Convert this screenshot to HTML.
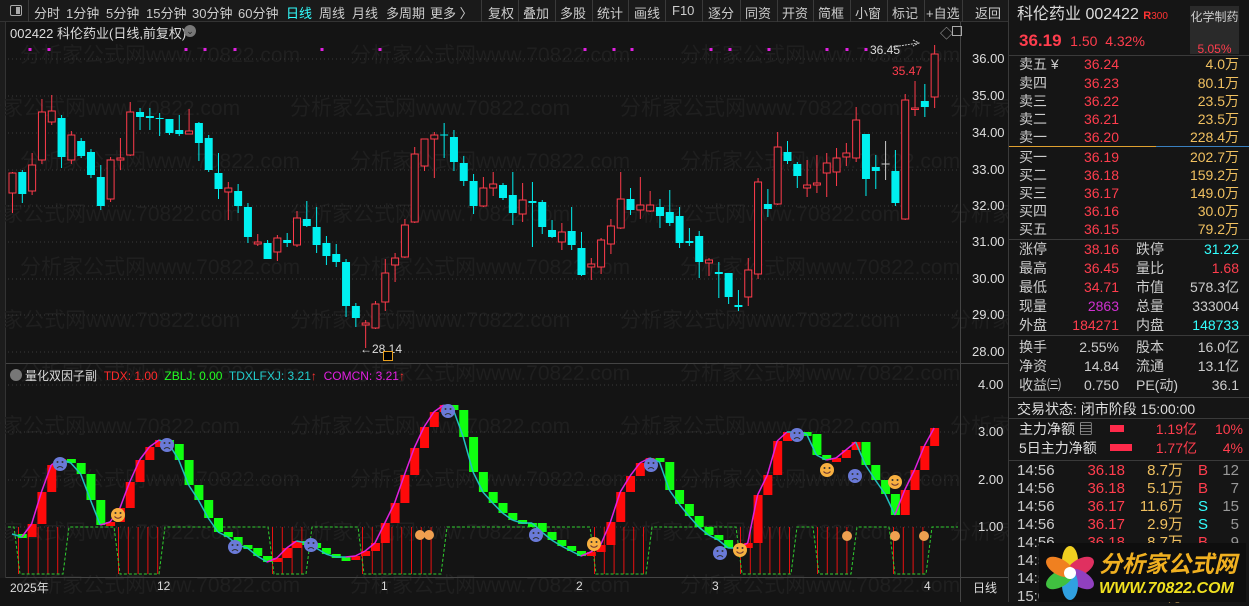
<!DOCTYPE html>
<html><head><meta charset="utf-8"><style>
*{margin:0;padding:0;box-sizing:border-box}
body{width:1249px;height:602px;background:#141414;overflow:hidden;position:relative;font-family:"Liberation Sans","Noto Sans CJK SC",sans-serif;color:#ccc}
.a{position:absolute;white-space:nowrap}
#tb{position:absolute;left:0;top:0;width:1008px;height:22px;background:#1a1a1a;border-bottom:1px solid #333;font-size:13px;color:#ccc}
#tb span{position:absolute;top:3px}
.sep{position:absolute;top:0;width:1px;height:22px;background:#3a3a3a}
#rp{position:absolute;left:1008px;top:0;width:241px;height:602px;background:#151515;border-left:1px solid #3a3a3a;font-size:14px}
#rp .a{line-height:18px}
.r{color:#ff3d4d}.y{color:#f0c060}.c{color:#3ff}.w{color:#ccc}.m{color:#d030d0}
.hl{position:absolute;left:0;width:241px;height:1px;background:#3a3a3a}
</style></head><body>
<div id="tb">
<div style="position:absolute;left:10px;top:5px;width:12px;height:11px;border:1px solid #aaa;border-radius:2px"><div style="position:absolute;right:1px;top:1px;width:4px;height:7px;background:#aaa"></div></div>
<div class="sep" style="left:28px"></div>
<span style="left:34px">分时</span><span style="left:66px">1分钟</span><span style="left:106px">5分钟</span><span style="left:146px">15分钟</span><span style="left:192px">30分钟</span><span style="left:238px">60分钟</span><span style="left:286px;color:#3ff">日线</span><span style="left:319px">周线</span><span style="left:352px">月线</span><span style="left:386px">多周期</span><span style="left:430px">更多 〉</span>
<div class="sep" style="left:481px"></div><span style="left:488px">复权</span>
<div class="sep" style="left:518px"></div><span style="left:523px">叠加</span>
<div class="sep" style="left:555px"></div><span style="left:560px">多股</span>
<div class="sep" style="left:592px"></div><span style="left:597px">统计</span>
<div class="sep" style="left:628px"></div><span style="left:634px">画线</span>
<div class="sep" style="left:665px"></div><span style="left:672px">F10</span>
<div class="sep" style="left:702px"></div><span style="left:708px">逐分</span>
<div class="sep" style="left:740px"></div><span style="left:745px">同资</span>
<div class="sep" style="left:777px"></div><span style="left:782px">开资</span>
<div class="sep" style="left:813px"></div><span style="left:818px">简框</span>
<div class="sep" style="left:850px"></div><span style="left:855px">小窗</span>
<div class="sep" style="left:887px"></div><span style="left:892px">标记</span>
<div class="sep" style="left:924px"></div><span style="left:926px">+自选</span>
<div class="sep" style="left:962px"></div><span style="left:975px">返回</span>
</div>
<div style="position:absolute;left:0;top:22px;width:6px;height:556px;background:#1c1c1c;border-right:1px solid #333"></div>
<svg id="ch" width="1008" height="602" style="position:absolute;left:0;top:0"></svg>
<div class="a" style="left:10px;top:23px;font-size:13px;color:#ddd">002422 科伦药业(日线,前复权)</div>
<div class="a" style="left:184px;top:25px;width:12px;height:12px;border-radius:6px;background:#777;color:#222;font-size:9px;text-align:center;line-height:12px">⌄</div>
<div class="a" style="left:940px;top:23px;font-size:13px;color:#aaa">◇</div>
<div class="a" style="left:952px;top:26px;width:10px;height:10px;border:1px solid #aaa"></div>
<div class="a" style="left:870px;top:43px;font-size:12px;color:#ddd">36.45</div>
<div class="a" style="left:892px;top:64px;font-size:12px;color:#ff3d4d">35.47</div>
<div class="a" style="left:360px;top:342px;font-size:12px;color:#ddd">←28.14</div>
<div class="a" style="left:383px;top:351px;width:10px;height:10px;border:1px solid #e8a020;background:#000"></div>
<div class="a" style="left:10px;top:369px;width:12px;height:12px;border-radius:6px;background:#777"></div>
<div class="a" style="left:25px;top:367px;font-size:12px"><span style="color:#ddd">量化双因子副</span>&nbsp; <span style="color:#ff2a2a">TDX: 1.00</span>&nbsp; <span style="color:#2f2">ZBLJ: 0.00</span>&nbsp; <span style="color:#2cc">TDXLFXJ: 3.21</span><span style="color:#f33">↑</span>&nbsp; <span style="color:#e020e0">COMCN: 3.21</span><span style="color:#f33">↑</span></div>
<div class="a" style="left:10px;top:579px;font-size:12px;color:#ddd">2025年</div>
<div class="a" style="left:157px;top:579px;font-size:12px;color:#ddd">12</div>
<div class="a" style="left:381px;top:579px;font-size:12px;color:#ddd">1</div>
<div class="a" style="left:576px;top:579px;font-size:12px;color:#ddd">2</div>
<div class="a" style="left:712px;top:579px;font-size:12px;color:#ddd">3</div>
<div class="a" style="left:924px;top:579px;font-size:12px;color:#ddd">4</div>
<div class="a" style="left:973px;top:579px;font-size:12px;color:#ddd">日线</div>
<div id="ax"></div>

<div id="rp">
<div class="a" style="left:8px;top:4px;font-size:16px;color:#ddd;line-height:22px">科伦药业 002422 <span style="color:#f33;font-size:11px;font-weight:bold">R</span><span style="color:#f33;font-size:10px">300</span></div>
<div class="a" style="left:10px;top:30px;font-size:17px;line-height:22px"><b class="r">36.19</b> <span class="r" style="font-size:14px">&nbsp;1.50&nbsp; 4.32%</span></div>
<div class="a" style="left:181px;top:6px;width:49px;height:48px;background:#2a2a2a;font-size:12px;text-align:center;color:#ccc;line-height:16px;padding-top:3px">化学制药<br><br><span class="r">5.05%</span></div>
<div class="hl" style="top:55px"></div>
<div id="q"></div>
<div class="a" style="left:0;top:146px;width:147px;height:1px;background:#e0a030"></div>
<div class="a" style="left:147px;top:146px;width:94px;height:1px;background:#3a80c0"></div>
<div class="hl" style="top:239px"></div><div class="hl" style="top:335px"></div><div class="hl" style="top:397px"></div><div class="hl" style="top:418px"></div><div class="hl" style="top:460px"></div>
<div class="a" style="left:8px;top:400px;color:#ddd">交易状态: 闭市阶段 15:00:00</div>
<div class="a" style="left:10px;top:420px;color:#ddd">主力净额 ▤</div>
<div class="a" style="left:10px;top:439px;color:#ddd">5日主力净额</div>
<div class="a" style="left:101px;top:425px;width:14px;height:7px;background:#ff2a4a"></div>
<div class="a" style="left:101px;top:444px;width:22px;height:7px;background:#ff2a4a"></div>
<div class="a r" style="right:52px;top:420px">1.19亿</div><div class="a r" style="right:6px;top:420px">10%</div>
<div class="a r" style="right:52px;top:439px">1.77亿</div><div class="a r" style="right:6px;top:439px">4%</div>
<div class="a" style="left:30px;top:543px;width:207px;height:59px;background:#0e0e0e"></div>
<svg class="a" style="left:32px;top:545px" width="58" height="55" viewBox="0 0 58 55">
<g transform="translate(29,28)"><ellipse rx="8" ry="15" cy="-12" fill="#f0d020"/><ellipse rx="8" ry="15" cy="-12" fill="#e03060" transform="rotate(60)"/><ellipse rx="8" ry="15" cy="-12" fill="#9040c0" transform="rotate(120)"/><ellipse rx="8" ry="15" cy="-12" fill="#30a0e0" transform="rotate(180)"/><ellipse rx="8" ry="15" cy="-12" fill="#40c040" transform="rotate(240)"/><ellipse rx="8" ry="15" cy="-12" fill="#f08020" transform="rotate(300)"/><circle r="6" fill="#fff"/></g></svg>
<div class="a" style="left:90px;top:551px;font-size:23px;font-weight:bold;color:#f0b020;font-style:italic;line-height:26px">分析家公式网</div>
<div class="a" style="left:90px;top:579px;font-size:16px;font-weight:bold;color:#f0e020;font-style:italic;line-height:20px">WWW.70822.COM</div>
</div>
<script>
var s=document.getElementById('ch'),h='';
function X(i){return 12+i*9.81}
for(var ry=0;ry<11;ry++){var yy=62+ry*53;for(var k=-1;k<4;k++){h+='<text x="'+(k*330+(ry%2?-60:0)+20)+'" y="'+yy+'" font-size="21" fill="#1f1f1f" font-family="Liberation Sans,Noto Sans CJK SC,sans-serif">分析家公式网www.70822.com</text>'}}
[59,96,133,170,206,242,279,315,352].forEach(function(y){h+='<line x1="8" x2="960" y1="'+y+'" y2="'+y+'" stroke="#3a3a3a" stroke-dasharray="1,3"/>'});
[385,432,480,527].forEach(function(y){h+='<line x1="8" x2="960" y1="'+y+'" y2="'+y+'" stroke="#3a3a3a" stroke-dasharray="1,3"/>'});
h+='<line x1="960.5" x2="960.5" y1="22" y2="602" stroke="#444"/><line x1="6" x2="1008" y1="363.5" y2="363.5" stroke="#444"/><line x1="6" x2="1008" y1="577.5" y2="577.5" stroke="#444"/>';
[30,49,186,205,235,322,380,585,614,632,711,730,769,827,847,866].forEach(function(x){h+='<rect x="'+(x-1.5)+'" y="48" width="3" height="3" fill="#e020e0"/>'});
var C=[['r',173,193,172,213],['c',172,194,170,203],['r',165,191,153,195],['r',112,160,99,164],['r',111,122,95,125],['c',118,157,115,168],['r',135,160,131,164],['c',141,156,138,158],['c',152,175,149,178],['c',177,206,165,210],['r',160,199,157,202],['r',158,160,138,170],['r',112,155,102,156],['c',112,117,108,130],['c',116,118,108,130],['c',118,119,113,136],['c',119,133,119,135],['c',130,134,115,136],['r',131,134,109,134],['c',123,143,122,161],['c',138,170,135,172],['c',173,189,153,199],['r',188,192,182,220],['c',191,206,184,213],['c',207,237,203,243],['r',242,244,234,246],['c',243,259,240,259],['r',238,252,235,261],['c',240,243,233,247],['r',218,245,211,247],['c',219,226,201,227],['c',227,245,207,253],['c',243,256,236,265],['c',254,262,244,267],['c',262,306,259,317],['c',306,318,303,327],['r',323,325,320,348],['r',304,328,301,329],['r',273,302,259,311],['r',258,265,253,282],['r',225,257,219,258],['r',154,222,147,223],['r',139,166,139,171],['r',135,139,132,178],['c',134.5,135.5,123,158],['c',137,162,130,171],['c',163,181,156,186],['c',181,206,174,214],['r',188,206,177,207],['r',184,188,172,196],['c',185,198,183,200],['c',195,213,172,225],['r',200,214,183,222],['c',201,203,182,247],['c',202,227,200,234],['c',230,237,220,238],['r',232,242,223,250],['c',231,245,207,250],['c',248,275,232,276],['r',264,267,258,280],['r',240,267,238,274],['r',226,244,219,254],['r',199,228,172,229],['c',199,210,188,215],['r',205,210,177,219],['r',205,211,191,212],['c',207,216,199,228],['c',212,223,190,226],['c',216,243,207,248],['c',241,243,228,246],['c',236,262,231,278],['r',260,263,258,276],['c',272,274,262,298],['c',273,297,273,304],['c',305,307,290,311],['r',270,297,258,306],['r',182,274,178,279],['c',204,209,189,217],['r',147,204,132,205],['c',152,161,141,164],['c',164,176,162,188],['r',185,188,160,197],['r',183,185,155,193],['r',163,173,153,197],['r',158,172,148,186],['r',153,157,143,166],['r',120,158,107,162],['c',134,179,134,196],['c',167,171,155,189],['w',163.5,164.5,141,180],['c',171,203,150,206],['r',100,219,94,220],['r',108,109.5,81,116],['c',101,107,84,117],['r',54,97,45,108]];
C.forEach(function(d,i){var x=X(i),col=d[0]=='r'?'#ff3b4b':d[0]=='c'?'#00f0f0':'#ccc';
h+='<line x1="'+(x+.5)+'" x2="'+(x+.5)+'" y1="'+d[3]+'" y2="'+d[4]+'" stroke="'+col+'"/>';
var bh=Math.max(1,d[2]-d[1]);
if(d[0]=='r')h+='<rect x="'+(x-3)+'" y="'+d[1]+'" width="7" height="'+bh+'" fill="#141414" stroke="'+col+'" stroke-width="1"/>';
else h+='<rect x="'+(x-3.5)+'" y="'+d[1]+'" width="8" height="'+bh+'" fill="'+col+'"/>';});
h+='<path d="M893 47 L918 43 M913 40 L919 43 L913 46" stroke="#ccc" fill="none" stroke-dasharray="2,1"/>';
var reg=[[18,62],[118,158],[272,305],[362,440],[594,645],[740,790],[817,850],[893,925]];
var pts='M8 527';
reg.forEach(function(r){pts+=' L'+(r[0]-4)+' 527 L'+(r[0]+2)+' 574 L'+(r[1]+1)+' 574 L'+(r[1]+7)+' 527';for(var x=r[0];x<=r[1];x+=9.8)h+='<line x1="'+(x+.5)+'" x2="'+(x+.5)+'" y1="527" y2="574" stroke="#e81010"/>';});
pts+=' L958 527';
h+='<path d="'+pts+'" stroke="#30d030" fill="none" stroke-dasharray="3,2"/>';
var V=[534,537,524,492,465,459,463,474,500,525,522,508,482,460,447,440,444,460,485,500,518,532,537,545,548,556,562,558,548,541,543,548,554,557,557,556,551,543,523,503,475,448,427,412,405,410,437,472,492,503,513,520,523,523,532,540,546,551,556,552,545,522,492,476,463,458,462,490,504,516,527,535,540,548,548,543,495,475,441,432,432,434,455,460,458,450,442,465,480,494,515,490,470,446,428];
V.forEach(function(v,i){if(i==0)return;var p=V[i-1],x=X(i),t=Math.min(p,v),b=Math.max(p,v),hh=Math.max(4,b-t);
h+='<rect x="'+(x-4)+'" y="'+t+'" width="9" height="'+hh+'" fill="'+(v<p?'#ff0a0a':'#10ff10')+'"/>';});
V.forEach(function(v,i){if(i==0)return;h+='<line x1="'+X(i-1)+'" y1="'+V[i-1]+'" x2="'+X(i)+'" y2="'+v+'" stroke="'+(v<V[i-1]?'#e020e0':'#20c0c0')+'" stroke-width="1.5"/>'});
function face(x,y,sad){var c=sad?'#6a7ad8':'#f8b040';h+='<circle cx="'+x+'" cy="'+y+'" r="7" fill="'+c+'"/><circle cx="'+(x-2.5)+'" cy="'+(y-2)+'" r="1" fill="#333"/><circle cx="'+(x+2.5)+'" cy="'+(y-2)+'" r="1" fill="#333"/>';
h+=sad?'<path d="M'+(x-3)+' '+(y+4)+' Q'+x+' '+(y+1)+' '+(x+3)+' '+(y+4)+'" stroke="#333" fill="none"/>':'<path d="M'+(x-3.5)+' '+(y+1.5)+' Q'+x+' '+(y+5)+' '+(x+3.5)+' '+(y+1.5)+'" stroke="#633" fill="none"/>';}
[[60,464],[167,445],[235,547],[311,545],[448,411],[536,535],[651,465],[720,553],[797,435],[855,476]].forEach(function(p){face(p[0],p[1],1)});
[[118,515],[594,544],[740,550],[827,470],[895,482]].forEach(function(p){face(p[0],p[1],0)});
[[420,535],[429,535],[847,536],[895,536],[924,536]].forEach(function(p){h+='<circle cx="'+p[0]+'" cy="'+p[1]+'" r="5" fill="#f0a050"/>'});
s.innerHTML=h;
var ax='';[['36.00',59],['35.00',96],['34.00',133],['33.00',170],['32.00',206],['31.00',242],['30.00',279],['29.00',315],['28.00',352],['4.00',385],['3.00',432],['2.00',480],['1.00',527]].forEach(function(a){ax+='<div class="a" style="left:'+(a[0].length>4?972:978)+'px;top:'+(a[1]-8)+'px;font-size:13px;color:#ddd">'+a[0]+'</div>'});
document.getElementById('ax').innerHTML=ax;
var q='',rows=[['卖五 ¥','36.24','4.0万',64],['卖四','36.23','80.1万',83],['卖三','36.22','23.5万',101],['卖二','36.21','23.5万',119],['卖一','36.20','228.4万',137],['买一','36.19','202.7万',157],['买二','36.18','159.2万',175],['买三','36.17','149.0万',193],['买四','36.16','30.0万',211],['买五','36.15','79.2万',229]];
rows.forEach(function(r){q+='<div class="a w" style="left:10px;top:'+(r[3]-9)+'px">'+r[0]+'</div><div class="a r" style="right:130px;top:'+(r[3]-9)+'px">'+r[1]+'</div><div class="a y" style="right:10px;top:'+(r[3]-9)+'px">'+r[2]+'</div>'});
var st=[['涨停','38.16','r','跌停','31.22','c',249],['最高','36.45','r','量比','1.68','r',268],['最低','34.71','r','市值','578.3亿','w',287],['现量','2863','m','总量','333004','w',306],['外盘','184271','r','内盘','148733','c',325],['换手','2.55%','w','股本','16.0亿','w',347],['净资','14.84','w','流通','13.1亿','w',366],['收益㈢','0.750','w','PE(动)','36.1','w',385]];
st.forEach(function(r){var t=r[6]-9;q+='<div class="a w" style="left:10px;top:'+t+'px">'+r[0]+'</div><div class="a '+r[2]+'" style="right:130px;top:'+t+'px">'+r[1]+'</div><div class="a w" style="left:127px;top:'+t+'px">'+r[3]+'</div><div class="a '+r[5]+'" style="right:10px;top:'+t+'px">'+r[4]+'</div>'});
var tr=[['36.18','8.7万','B','12'],['36.18','5.1万','B','7'],['36.17','11.6万','S','15'],['36.17','2.9万','S','5'],['36.18','8.7万','B','9'],['36.18','4.1万','B','6'],['36.17','3.0万','S','4'],['36.19','9.9万','B','10']];
tr.forEach(function(r,i){var t=462+i*18;q+='<div class="a w" style="left:8px;top:'+t+'px;font-size:15px">'+(i==7?'15:00':'14:56')+'</div><div class="a r" style="right:124px;top:'+t+'px;font-size:15px">'+r[0]+'</div><div class="a y" style="right:66px;top:'+t+'px;font-size:15px">'+r[1]+'</div><div class="a '+(r[2]=='B'?'r':'c')+'" style="left:189px;top:'+t+'px;font-size:15px">'+r[2]+'</div><div class="a" style="right:10px;top:'+t+'px;font-size:15px;color:#999">'+r[3]+'</div>'});
document.getElementById('q').innerHTML=q;
</script>
</body></html>
